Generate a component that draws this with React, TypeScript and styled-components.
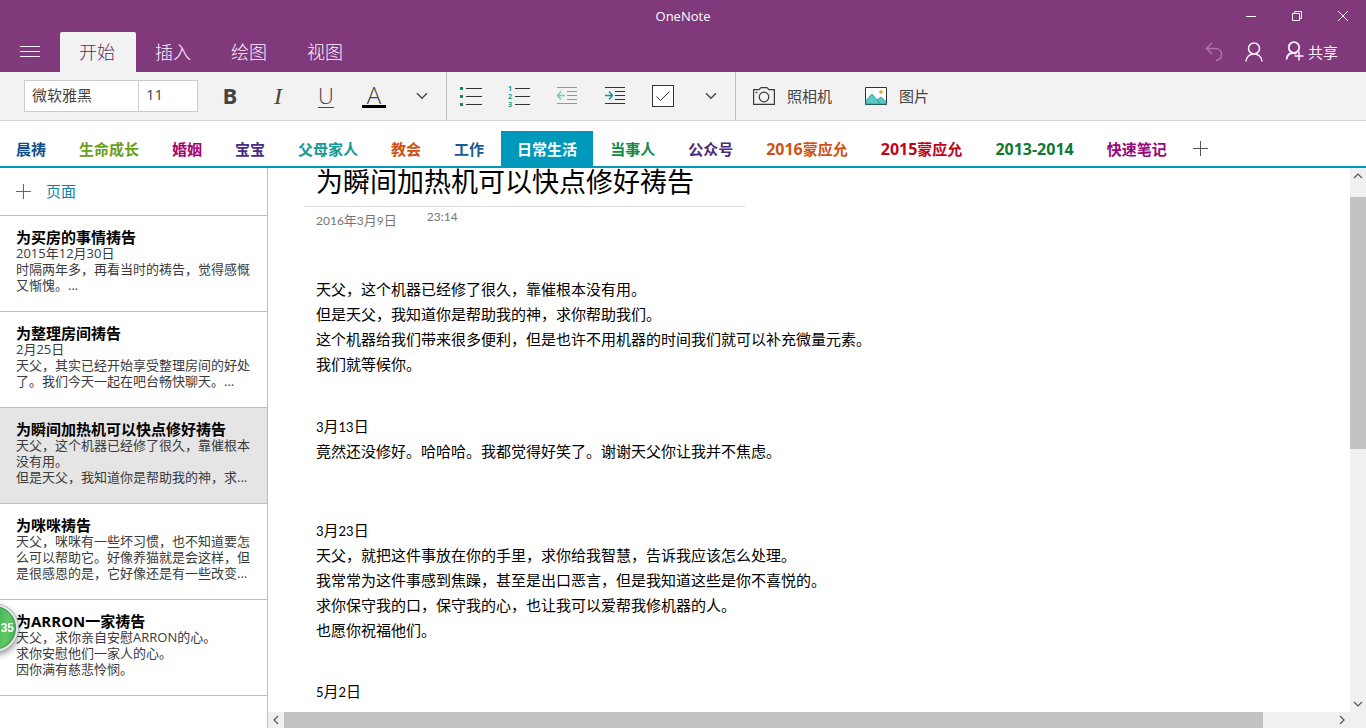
import React from 'react';
import styled, { createGlobalStyle, css } from 'styled-components';

const uiFont = `'Open Sans', 'Noto Sans CJK SC', sans-serif`;
const noteFont = `Lato, 'Noto Sans CJK SC', sans-serif`;
const purple = '#80397b';
const teal = '#0099bc';

const GlobalStyle = createGlobalStyle`
  * { box-sizing: border-box; }
  html, body { margin: 0; height: 100%; }
  body { font-family: ${uiFont}; background: #fff; color: #000; overflow: hidden; }
  button, input { font: inherit; color: inherit; margin: 0; }
  button { border: 0; padding: 0; background: none; cursor: pointer; }
  svg { display: block; flex: none; }
  h1, h2, p, ul { margin: 0; padding: 0; }
`;

const Window = styled.div`
  display: flex;
  flex-direction: column;
  height: 100vh;
`;

/* ---------- title bar ---------- */
const TitleBar = styled.header`
  display: grid;
  grid-template-columns: 1fr auto 1fr;
  align-items: center;
  height: 32px;
  flex: none;
  background: ${purple};
  color: #fff;
  font-size: 13px;
`;
const AppName = styled.span`
  grid-column: 2;
`;
const WindowButtons = styled.div`
  display: flex;
  justify-content: flex-end;
`;
const WindowButton = styled.button`
  display: flex;
  align-items: center;
  justify-content: center;
  width: 46px;
  height: 32px;
`;

/* ---------- ribbon tabs ---------- */
const RibbonBar = styled.nav`
  display: flex;
  height: 40px;
  flex: none;
  background: ${purple};
  color: #fff0fe;
`;
const MenuButton = styled.button`
  display: flex;
  align-items: center;
  justify-content: center;
  width: 60px;
`;
const RibbonTab = styled.button<{ $active?: boolean }>`
  width: 76px;
  padding-right: 2px;
  font-size: 18px;
  font-weight: 300;
  line-height: 40px;
  ${(p) =>
    p.$active &&
    css`
      background: #f2f2f2;
      color: #5c2a5c;
      border-radius: 2px 2px 0 0;
    `}
`;
const Account = styled.div`
  display: flex;
  margin-left: auto;
  padding-right: 28px;
`;
const AccountButton = styled.button<{ $dim?: boolean }>`
  display: flex;
  align-items: center;
  justify-content: center;
  min-width: 40px;
  opacity: ${(p) => (p.$dim ? 0.35 : 1)};
`;
const ShareButton = styled(AccountButton)`
  gap: 4px;
  padding: 0 0 2px 11px;
  font-size: 15px;
`;

/* ---------- toolbar ---------- */
const Toolbar = styled.div`
  display: flex;
  height: 49px;
  flex: none;
  background: #f2f2f2;
  border-bottom: 1px solid #d2d2d2;
  color: #444;
  font-size: 15px;
`;
const FontFields = styled.div`
  display: flex;
  align-self: center;
  margin: 0 8px 0 24px;
`;
const FontField = styled.input<{ $width: number }>`
  width: ${(p) => p.$width}px;
  height: 32px;
  padding: 0 7px 4px;
  border: 1px solid #ccc;
  background: #fff;
  outline: 0;
  & + & {
    border-left: 0;
  }
`;
const ToolGroup = styled.div`
  display: flex;
  border-right: 1px solid #bdbdbd;
`;
const ToolButton = styled.button`
  display: flex;
  align-items: center;
  justify-content: center;
  width: 48px;
`;
const Glyph = styled.span<{ $kind: 'bold' | 'italic' | 'under' | 'color' }>`
  font-size: 22px;
  line-height: 22px;
  height: 24px;
  ${(p) => p.$kind === 'bold' && 'font-weight: 700;'}
  ${(p) =>
    p.$kind === 'italic' &&
    `font-family: 'Liberation Serif', serif; font-style: italic; font-size: 24px; line-height: 24px;`}
  ${(p) =>
    p.$kind === 'under' &&
    'width: 16px; font-weight: 300; border-bottom: 1px solid #444;'}
  ${(p) =>
    p.$kind === 'color' &&
    'width: 24px; font-weight: 300; font-size: 24px; border-bottom: 3px solid #000;'}
`;
const InsertGroup = styled.div`
  display: flex;
  gap: 33px;
  padding: 0 0 1px 17px;
`;
const InsertButton = styled.button`
  display: flex;
  align-items: center;
  gap: 12px;
`;

/* ---------- section tabs ---------- */
const Sections = styled.nav`
  display: flex;
  gap: 1px;
  height: 47px;
  flex: none;
  padding-top: 10px;
  border-bottom: 2px solid ${teal};
`;
const SectionTab = styled.button<{ $color: string; $active?: boolean }>`
  padding: 2px 16px 0;
  font-size: 15px;
  font-weight: 700;
  line-height: 33px;
  white-space: nowrap;
  color: ${(p) => (p.$active ? '#fff' : p.$color)};
  background: ${(p) => (p.$active ? teal : 'transparent')};
`;
const AddSection = styled.button`
  display: flex;
  align-items: center;
  padding: 0 9px;
  color: #555;
`;

/* ---------- page list ---------- */
const Main = styled.div`
  display: flex;
  flex: 1;
  min-height: 0;
`;
const Sidebar = styled.aside`
  width: 268px;
  flex: none;
  border-right: 1px solid #bdbdbd;
  overflow: hidden;
`;
const AddPage = styled.button`
  display: flex;
  align-items: center;
  gap: 15px;
  width: 100%;
  height: 48px;
  padding: 0 16px 1px;
  border-bottom: 1px solid #bdbdbd;
  color: #12809e;
  font-size: 15px;
  line-height: 20px;
`;
const PageList = styled.ul`
  list-style: none;
`;
const PageItem = styled.li<{ $selected?: boolean }>`
  height: 96px;
  padding: 13px 16px 0;
  border-bottom: 1px solid #bdbdbd;
  background: ${(p) => (p.$selected ? '#e5e5e5' : '#fff')};
`;
const PageTitle = styled.h2`
  font-size: 15px;
  line-height: 16px;
  font-weight: 700;
`;
const PagePreview = styled.p`
  font-size: 13px;
  line-height: 16px;
  color: #3a3a3a;
  white-space: pre;
`;

/* ---------- note canvas ---------- */
const Canvas = styled.main`
  display: flex;
  flex-direction: column;
  flex: 1;
  min-width: 0;
`;
const CanvasRow = styled.div`
  display: flex;
  flex: 1;
  min-height: 0;
`;
const Note = styled.article`
  flex: 1;
  min-width: 0;
  overflow: hidden;
  padding-left: 36px;
  font-family: ${noteFont};
`;
const NoteHeader = styled.header`
  max-width: 441px;
  padding: 0 0 10px 12px;
  border-bottom: 1px solid #dedede;
`;
const NoteTitle = styled.h1`
  font-size: 27px;
  font-weight: 400;
  line-height: 28px;
  white-space: nowrap;
`;
const Stamp = styled.div`
  display: flex;
  align-items: flex-start;
  gap: 30px;
  padding-left: 12px;
  color: #767676;
  font-size: 13px;
  line-height: 20px;
`;
const StampDate = styled.span`
  padding-top: 3px;
`;
const StampTime = styled.span`
  font-size: 12px;
`;
const Num = styled.span`
  font-size: 12px;
  line-height: 12px;
`;
const BodyNum = styled.span`
  font-size: 13px;
  line-height: 13px;
`;
const SectionNum = styled.span`
  font-size: 16px;
  line-height: 16px;
`;
const NoteBody = styled.div`
  padding: 47px 0 0 12px;
  font-size: 15px;
  line-height: 25px;
  white-space: nowrap;
`;
const Block = styled.div<{ $gap: number }>`
  margin-bottom: ${(p) => p.$gap}px;
`;

/* ---------- scroll bars ---------- */
const VBar = styled.div`
  display: flex;
  flex-direction: column;
  width: 16px;
  flex: none;
  background: #f0f0f0;
`;
const HBar = styled.div`
  display: flex;
  height: 16px;
  flex: none;
  padding-right: 16px;
  background: #f0f0f0;
`;
const ScrollButton = styled.button`
  display: flex;
  align-items: center;
  justify-content: center;
  width: 16px;
  height: 16px;
  flex: none;
`;
const Track = styled.div<{ $vertical?: boolean }>`
  display: flex;
  flex: 1;
  flex-direction: ${(p) => (p.$vertical ? 'column' : 'row')};
`;
const Space = styled.div<{ $grow: number }>`
  flex: ${(p) => p.$grow} 1 0;
`;
const Thumb = styled(Space)`
  background: #c2c2c2;
`;

/* ---------- floating meter ---------- */
const Meter = styled.div`
  position: fixed;
  left: -30px;
  bottom: 76px;
  display: flex;
  align-items: center;
  justify-content: flex-end;
  width: 48px;
  height: 48px;
  padding-right: 2px;
  border: 2px solid #e3e6e8;
  border-radius: 50%;
  background: linear-gradient(100deg, #3fb25a 50%, #62c765 75%, #35a94f);
  box-shadow: 0 0 0 1px #a9adb1, inset 0 0 0 1px #3b8f4c, 1px 3px 6px rgba(0, 0, 0, 0.4);
  color: #fff;
  font: 700 12px 'Liberation Sans', sans-serif;
`;

/* ---------- icons ---------- */
type IconProps = { w: number; h: number; color?: string; sw?: number; children: React.ReactNode };
const Icon = ({ w, h, color = 'currentColor', sw = 1, children }: IconProps) => (
  <svg width={w} height={h} viewBox={`0 0 ${w} ${h}`} fill="none" stroke={color} strokeWidth={sw} aria-hidden="true">
    {children}
  </svg>
);

const Chevron = () => (
  <Icon w={12} h={8} sw={1.4}><path d="M1 1.2 6 6.2 11 1.2" /></Icon>
);
const Plus = () => (
  <Icon w={15} h={15}><path d="M7.5 0V15M0 7.5H15" /></Icon>
);
const scrollPaths = {
  up: 'M1 7 5 3 9 7',
  down: 'M1 3 5 7 9 3',
  left: 'M7 1 3 5 7 9',
  right: 'M3 1 7 5 3 9',
};
const Scroller = ({ dir, label }: { dir: keyof typeof scrollPaths; label: string }) => (
  <ScrollButton aria-label={label}>
    <Icon w={10} h={10} color="#555" sw={1.2}><path d={scrollPaths[dir]} /></Icon>
  </ScrollButton>
);

const BulletIcon = () => (
  <Icon w={24} h={20} color="#333">
    <path d="M7 2.5H23M7 10.5H23M7 18.5H23" />
    <path d="M1 1h3v3H1zM1 9h3v3H1zM1 17h3v3H1z" fill="#10896b" stroke="none" />
  </Icon>
);
const NumberIcon = () => (
  <Icon w={24} h={22} color="#333">
    <path d="M8 3.5H23M8 11.5H23M8 19.5H23" />
    <g fill="#119a93" stroke="none" fontFamily="Open Sans, sans-serif" fontSize="7" fontWeight="700">
      <text x="1" y="6">1</text>
      <text x="1" y="14">2</text>
      <text x="1" y="22">3</text>
    </g>
  </Icon>
);
const OutdentIcon = () => (
  <Icon w={22} h={20} color="#999">
    <path d="M1 1.5H21M11 5.5H21M11 9.5H21M11 13.5H21M1 17.5H21" />
    <path d="M1.5 9.5H9M5 5.5 1.5 9.5 5 13.5" stroke="#7cc9b5" strokeWidth="1.5" />
  </Icon>
);
const IndentIcon = () => (
  <Icon w={22} h={20} color="#333">
    <path d="M1 1.5H21M11 5.5H21M11 9.5H21M11 13.5H21M1 17.5H21" />
    <path d="M1 9.5H8.5M5 5.5 8.5 9.5 5 13.5" stroke="#119a93" strokeWidth="1.5" />
  </Icon>
);
const CheckIcon = () => (
  <Icon w={22} h={22} color="#333">
    <rect x="0.5" y="0.5" width="21" height="21" fill="#fff" />
    <path d="M4.5 11.5 8.5 15.5 17.5 6.5" />
  </Icon>
);
const CameraIcon = () => (
  <Icon w={22} h={18} color="#3a3a3a" sw={1.2}>
    <path d="M.6 17.4V2.6H6L8 .6H14L16 2.6H21.4V17.4Z" />
    <circle cx="11" cy="10" r="4.8" />
    <path d="M2.5 5.5H4.5" />
  </Icon>
);
const PictureIcon = () => (
  <Icon w={22} h={18} color="#333">
    <path d="M.5 .5H21.5V17.5H.5Z" fill="#fff" />
    <path d="M1 13.500 7 7 15.500 17H1Z" fill="#5cc8c4" stroke="#1a9a96" strokeWidth=".8" />
    <path d="M12 13 16 10 21 15V17H15.500Z" fill="#5cc8c4" stroke="#1a9a96" strokeWidth=".8" />
    <circle cx="16" cy="5" r="1.8" fill="#f0a030" stroke="none" />
  </Icon>
);
const PersonIcon = () => (
  <Icon w={18} h={20} sw={1.5}>
    <circle cx="9" cy="6.5" r="5.5" />
    <path d="M1 19.5C1.5 14.5 5 12 9 12S16.5 14.5 17 19.5" />
  </Icon>
);
const ShareIcon = () => (
  <Icon w={19} h={20} sw={1.8}>
    <circle cx="9" cy="6.5" r="5.3" />
    <path d="M1.5 18.5C2 14.5 4.5 12 8 12C9.5 12 10.5 12.2 11.5 12.8" />
    <path d="M14 10.5V19.5M9.5 15H18.5" strokeWidth="1.5" />
  </Icon>
);
const UndoIcon = () => (
  <Icon w={18} h={20} sw={1.5}>
    <path d="M7 1 1.5 6.5 7 12M1.5 6.5H10C14 6.5 16.500 9 16.5 12.5C16.5 15.5 14.5 18 11 18.5" />
  </Icon>
);

/* ---------- data ---------- */
const ribbonTabs = ['开始', '插入', '绘图', '视图'];

const sections: { year?: string; name?: string; color: string; active?: boolean }[] = [
  { name: '晨祷', color: '#104f8c' },
  { name: '生命成长', color: '#6aa019' },
  { name: '婚姻', color: '#a8006d' },
  { name: '宝宝', color: '#4b2a86' },
  { name: '父母家人', color: '#119a93' },
  { name: '教会', color: '#cf5213' },
  { name: '工作', color: '#175a94' },
  { name: '日常生活', color: teal, active: true },
  { name: '当事人', color: '#108a45' },
  { name: '公众号', color: '#4b2a7c' },
  { year: '2016', name: '蒙应允', color: '#cf5213' },
  { year: '2015', name: '蒙应允', color: '#c00418' },
  { year: '2013-2014', color: '#0c7a34' },
  { name: '快速笔记', color: '#98077c' },
];

const pages = [
  { title: '为买房的事情祷告', preview: '2015年12月30日\n时隔两年多，再看当时的祷告，觉得感慨\n又惭愧。...' },
  { title: '为整理房间祷告', preview: '2月25日\n天父，其实已经开始享受整理房间的好处\n了。我们今天一起在吧台畅快聊天。...' },
  { title: '为瞬间加热机可以快点修好祷告', preview: '天父，这个机器已经修了很久，靠催根本\n没有用。\n但是天父，我知道你是帮助我的神，求...', selected: true },
  { title: '为咪咪祷告', preview: '天父，咪咪有一些坏习惯，也不知道要怎\n么可以帮助它。好像养猫就是会这样，但\n是很感恩的是，它好像还是有一些改变...' },
  { title: '为ARRON一家祷告', preview: '天父，求你亲自安慰ARRON的心。\n求你安慰他们一家人的心。\n因你满有慈悲怜悯。' },
];

const blocks: { gap: number; date?: string; lines: string[] }[] = [
  {
    gap: 37,
    lines: [
      '天父，这个机器已经修了很久，靠催根本没有用。',
      '但是天父，我知道你是帮助我的神，求你帮助我们。',
      '这个机器给我们带来很多便利，但是也许不用机器的时间我们就可以补充微量元素。',
      '我们就等候你。',
    ],
  },
  { gap: 54, date: '3月13日', lines: ['竟然还没修好。哈哈哈。我都觉得好笑了。谢谢天父你让我并不焦虑。'] },
  {
    gap: 36,
    date: '3月23日',
    lines: [
      '天父，就把这件事放在你的手里，求你给我智慧，告诉我应该怎么处理。',
      '我常常为这件事感到焦躁，甚至是出口恶言，但是我知道这些是你不喜悦的。',
      '求你保守我的口，保守我的心，也让我可以爱帮我修机器的人。',
      '也愿你祝福他们。',
    ],
  },
  { gap: 0, date: '5月2日', lines: [] },
];

/* Digits in note dates are set a little smaller than the characters. */
const DateText = ({ text, digits: Digits }: { text: string; digits: React.ElementType }) => (
  <>
    {text.split(/(\d+)/).map((part, i) => (/\d/.test(part) ? <Digits key={i}>{part}</Digits> : part))}
  </>
);

export default function App() {
  return (
    <Window>
      <GlobalStyle />
      <TitleBar>
        <AppName>OneNote</AppName>
        <WindowButtons>
          <WindowButton aria-label="最小化">
            <Icon w={10} h={10}><path d="M0 5.5H10" /></Icon>
          </WindowButton>
          <WindowButton aria-label="还原">
            <Icon w={10} h={10}><path d="M.5 2.5H7.5V9.5H.5ZM2.5 2.5V.5H9.5V7.5H7.5" /></Icon>
          </WindowButton>
          <WindowButton aria-label="关闭">
            <Icon w={10} h={10}><path d="M0 0 10 10M10 0 0 10" /></Icon>
          </WindowButton>
        </WindowButtons>
      </TitleBar>

      <RibbonBar>
        <MenuButton aria-label="菜单">
          <Icon w={20} h={12}><path d="M0 .5H20M0 5.5H20M0 10.5H20" /></Icon>
        </MenuButton>
        {ribbonTabs.map((name, i) => (
          <RibbonTab key={name} $active={i === 0}>{name}</RibbonTab>
        ))}
        <Account>
          <AccountButton aria-label="撤消" $dim><UndoIcon /></AccountButton>
          <AccountButton aria-label="帐户"><PersonIcon /></AccountButton>
          <ShareButton><ShareIcon />共享</ShareButton>
        </Account>
      </RibbonBar>

      <Toolbar>
        <FontFields>
          <FontField $width={115} defaultValue="微软雅黑" aria-label="字体" />
          <FontField $width={59} defaultValue="11" aria-label="字号" />
        </FontFields>
        <ToolGroup>
          <ToolButton aria-label="加粗"><Glyph $kind="bold">B</Glyph></ToolButton>
          <ToolButton aria-label="倾斜"><Glyph $kind="italic">I</Glyph></ToolButton>
          <ToolButton aria-label="下划线"><Glyph $kind="under">U</Glyph></ToolButton>
          <ToolButton aria-label="字体颜色"><Glyph $kind="color">A</Glyph></ToolButton>
          <ToolButton aria-label="更多字体选项"><Chevron /></ToolButton>
        </ToolGroup>
        <ToolGroup>
          <ToolButton aria-label="项目符号"><BulletIcon /></ToolButton>
          <ToolButton aria-label="编号"><NumberIcon /></ToolButton>
          <ToolButton aria-label="减少缩进"><OutdentIcon /></ToolButton>
          <ToolButton aria-label="增加缩进"><IndentIcon /></ToolButton>
          <ToolButton aria-label="待办事项"><CheckIcon /></ToolButton>
          <ToolButton aria-label="更多段落选项"><Chevron /></ToolButton>
        </ToolGroup>
        <InsertGroup>
          <InsertButton><CameraIcon />照相机</InsertButton>
          <InsertButton><PictureIcon />图片</InsertButton>
        </InsertGroup>
      </Toolbar>

      <Sections>
        {sections.map((s) => (
          <SectionTab key={(s.year ?? '') + (s.name ?? '')} $color={s.color} $active={s.active}>
            {s.year && <SectionNum>{s.year}</SectionNum>}
            {s.name}
          </SectionTab>
        ))}
        <AddSection aria-label="添加分区"><Plus /></AddSection>
      </Sections>

      <Main>
        <Sidebar>
          <AddPage><Plus />页面</AddPage>
          <PageList>
            {pages.map((p) => (
              <PageItem key={p.title} $selected={p.selected}>
                <PageTitle>{p.title}</PageTitle>
                <PagePreview>{p.preview}</PagePreview>
              </PageItem>
            ))}
          </PageList>
        </Sidebar>

        <Canvas>
          <CanvasRow>
            <Note>
              <NoteHeader>
                <NoteTitle>为瞬间加热机可以快点修好祷告</NoteTitle>
              </NoteHeader>
              <Stamp>
                <StampDate><DateText text="2016年3月9日" digits={Num} /></StampDate>
                <StampTime>23:14</StampTime>
              </Stamp>
              <NoteBody>
                {blocks.map((b, i) => (
                  <Block key={i} $gap={b.gap}>
                    {b.date && <p><DateText text={b.date} digits={BodyNum} /></p>}
                    {b.lines.map((line) => <p key={line}>{line}</p>)}
                  </Block>
                ))}
              </NoteBody>
            </Note>
            <VBar>
              <Scroller dir="up" label="向上滚动" />
              <Track $vertical>
                <Space $grow={13} />
                <Thumb $grow={252} />
                <Space $grow={247} />
              </Track>
              <Scroller dir="down" label="向下滚动" />
            </VBar>
          </CanvasRow>
          <HBar>
            <Scroller dir="left" label="向左滚动" />
            <Track>
              <Thumb $grow={979} />
              <Space $grow={71} />
            </Track>
            <Scroller dir="right" label="向右滚动" />
          </HBar>
        </Canvas>
      </Main>
      <Meter>35</Meter>
    </Window>
  );
}
